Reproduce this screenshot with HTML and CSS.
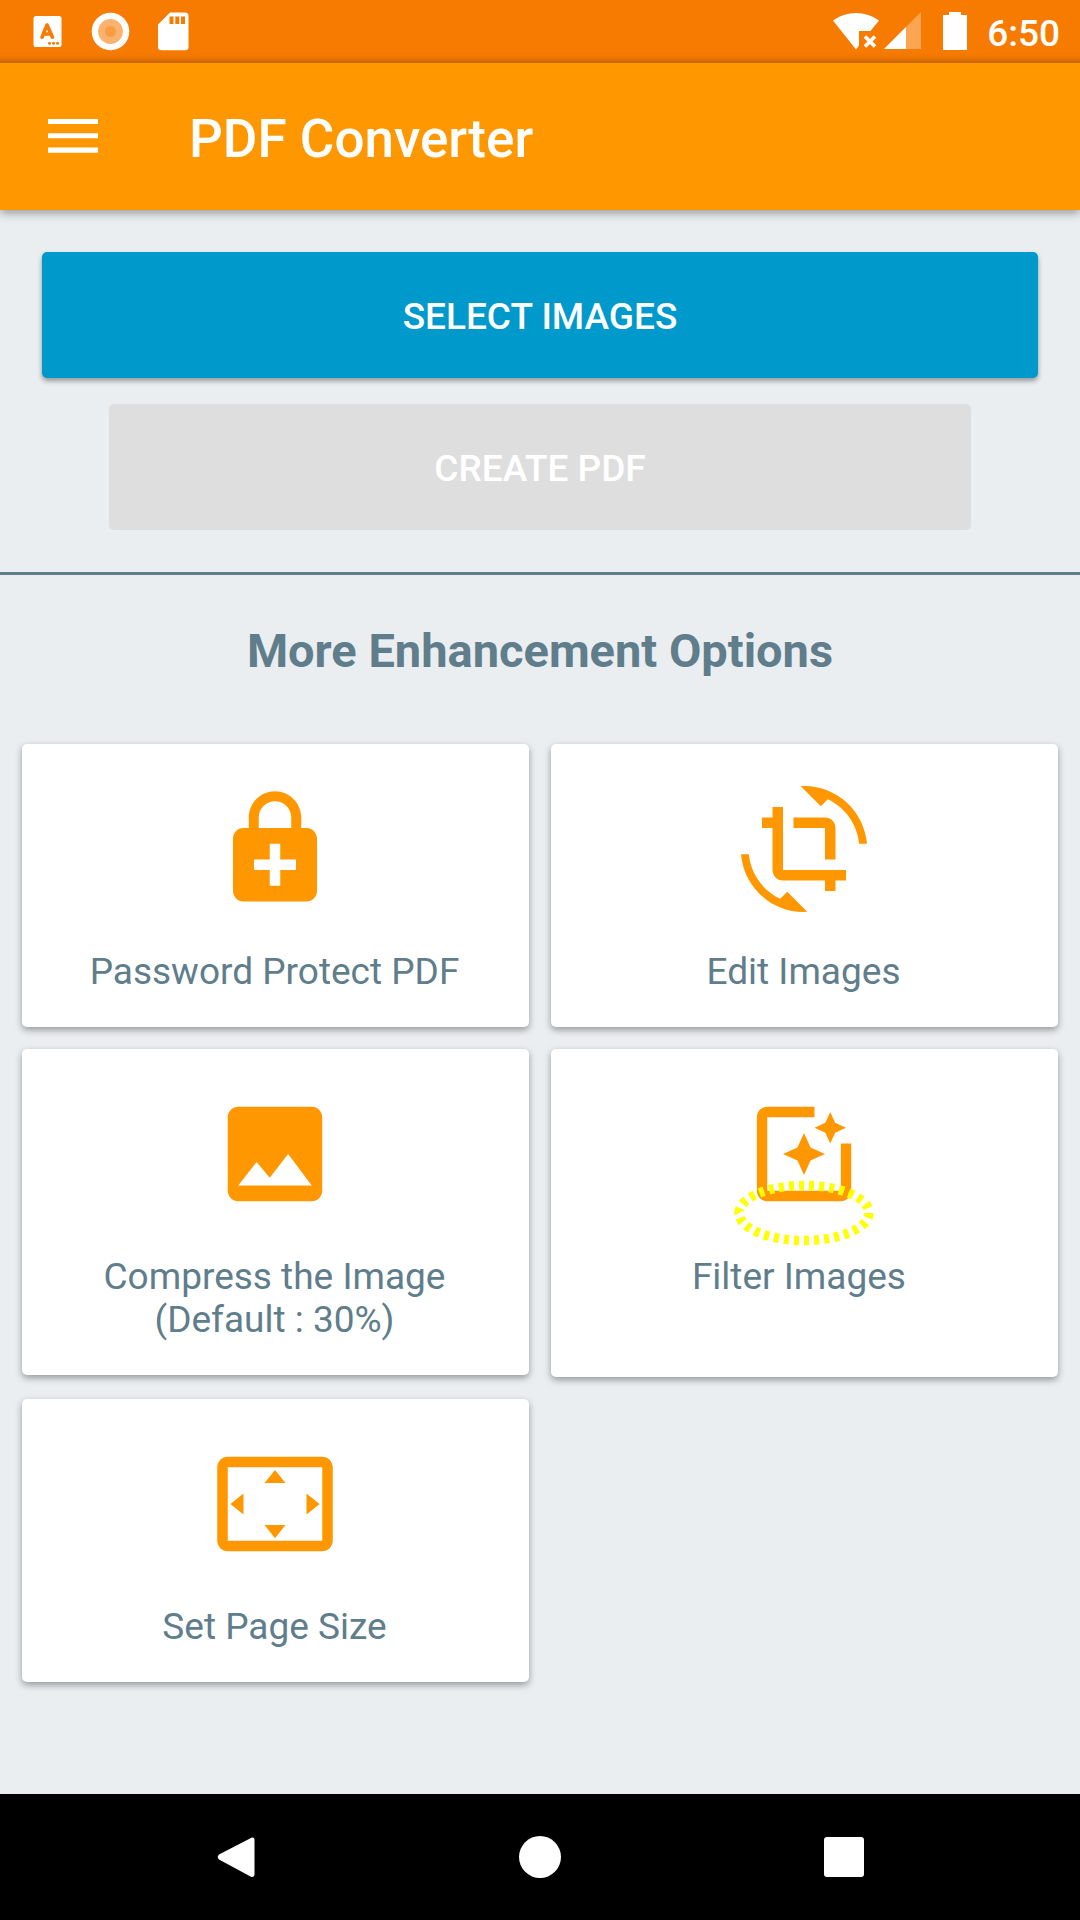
FILE: index.html
```html
<!DOCTYPE html>
<html lang="en">
<head>
<meta charset="utf-8">
<meta name="viewport" content="width=device-width, initial-scale=1">
<title>PDF Converter</title>
<link rel="stylesheet" href="styles.css">
</head>
<body>
<div class="status-bar">
  <div class="status-notifications">
    <svg width="63" height="63" viewBox="0 0 63 63" aria-hidden="true">
      <rect x="17.5" y="16" width="28" height="31" rx="2.5" fill="#fff"/>
      <path d="M26 37.200L31 25L36.500 37.200M28 34H34.500" fill="none" stroke="#f77b00" stroke-width="3.600" stroke-linecap="round" stroke-linejoin="round"/>
      <g fill="#f77b00"><circle cx="33.500" cy="43.200" r="1.500"/><circle cx="37.500" cy="43.200" r="1.500"/><circle cx="41.500" cy="43.200" r="1.500"/></g>
    </svg>
    <svg width="63" height="63" viewBox="0 0 63 63" aria-hidden="true">
      <circle cx="31.500" cy="31.500" r="18.800" fill="#fff"/>
      <circle cx="31.500" cy="31.500" r="12.400" fill="#fab26e"/>
      <circle cx="31.500" cy="31.500" r="5.600" fill="#f99d44"/>
    </svg>
    <svg width="63" height="63" viewBox="0 0 63 63" aria-hidden="true">
      <path d="M28 12.500H43Q46.500 12.500 46.500 16V47Q46.500 50.300 43 50.300H19.500Q16 50.300 16 47V24.500Z" fill="#fff"/>
      <path d="M27.500 16.500h4v7.500h-4zM33.300 16.500h4v7.500h-4zM39 16.500h4v7.500h-4z" fill="#f77b00"/>
    </svg>
  </div>
  <div class="status-system">
    <svg width="46" height="63" viewBox="0 0 46 63" aria-hidden="true">
      <path d="M0 20.500Q10 13 23 13T46 20.500L37.500 31H26V45.500L23 49.500Z" fill="#fff"/>
      <path d="M32 36.500L42 46.500M42 36.500L32 46.500" stroke="#fff" stroke-width="3.600"/>
    </svg>
    <svg class="signal" width="37" height="63" viewBox="0 0 37 63" aria-hidden="true">
      <path d="M37 12V49H0Z" fill="#fba552"/>
      <path d="M22 27V49H0Z" fill="#fff"/>
    </svg>
    <svg class="battery" width="24" height="63" viewBox="0 0 24 63" aria-hidden="true">
      <path d="M6 12H18V15H24V50H0V15H6Z" fill="#fff"/>
    </svg>
    <span class="clock">6:50</span>
  </div>
</div>

<header class="app-bar">
  <button class="menu-button" type="button" aria-label="Open menu">
    <svg width="50" height="36" viewBox="0 0 50 36" aria-hidden="true"><path d="M0 0h50v5H0zM0 14.300h50v5H0zM0 28.600h50v5.200H0z" fill="#fff"/></svg>
  </button>
  <h1 class="app-title">PDF Converter</h1>
</header>

<main class="content">
  <section class="actions">
    <button class="action action-select" type="button">SELECT IMAGES</button>
    <button class="action action-create" type="button" disabled>CREATE PDF</button>
  </section>
  <section class="options">
    <h2 class="options-title">More Enhancement Options</h2>
    <div class="option-grid">
      <button class="option" type="button">
        <svg class="option-icon" viewBox="0 0 24 24" aria-hidden="true"><path fill-rule="evenodd" d="M18 8h-1V6c0-2.760-2.240-5-5-5S7 3.240 7 6v2H6c-1.100 0-2 .9-2 2v10c0 1.100.9 2 2 2h12c1.100 0 2-.9 2-2V10c0-1.100-.9-2-2-2zM8.900 6c0-1.710 1.390-3.100 3.100-3.100s3.100 1.390 3.100 3.100v2H8.900V6zM16 16h-3v3h-2v-3H8v-2h3v-3h2v3h3v2z"/></svg>
        <span>Password Protect PDF</span>
      </button>
      <button class="option" type="button">
        <svg class="option-icon" viewBox="0 0 24 24" aria-hidden="true"><path d="M7.470 21.490C4.200 19.930 1.860 16.760 1.500 13H0c.51 6.160 5.660 11 11.950 11 .23 0 .44-.02.66-.03L8.800 20.150 7.470 21.490zM12.050 0c-.23 0-.44.02-.66.04l3.810 3.810 1.330-1.330C19.800 4.070 22.140 7.240 22.500 11H24C23.490 4.840 18.340 0 12.050 0zM16 14h2V8c0-1.110-.9-2-2-2h-6v2h6v6zM8 16V4H6v2H4v2h2v8c0 1.100.89 2 2 2h8v2h2v-2h2v-2H8z"/></svg>
        <span>Edit Images</span>
      </button>
      <button class="option" type="button">
        <svg class="option-icon" viewBox="0 0 24 24" aria-hidden="true"><path fill-rule="evenodd" d="M21 19V5c0-1.100-.9-2-2-2H5c-1.100 0-2 .9-2 2v14c0 1.100.9 2 2 2h14c1.100 0 2-.9 2-2zM8.500 13.500l2.500 3.010L14.500 12l4.500 6H5l3.500-4.500z"/></svg>
        <span>Compress the Image<br>(Default : 30%)</span>
      </button>
      <button class="option option-tall" type="button">
        <span class="icon-wrap">
          <svg class="option-icon" viewBox="0 0 24 24" aria-hidden="true"><path d="M19.020 10v9H5V5h9V3H5.020c-1.100 0-2 .9-2 2v14c0 1.100.9 2 2 2H19c1.100 0 2-.9 2-2v-9h-1.980zM17 10l.94-2.060L20 7l-2.060-.94L17 4l-.94 2.060L14 7l2.060.94zM13.250 10.750L12 8l-1.250 2.750L8 12l2.750 1.250L12 16l1.250-2.750L16 12z"/></svg>
          <svg class="marker" width="140" height="66" viewBox="0 0 140 66" aria-hidden="true"><ellipse cx="70" cy="33" rx="65" ry="27.500" pathLength="300" fill="none" stroke="#ff0" stroke-width="9.500" stroke-dasharray="5 5"/></svg>
        </span>
        <span>Filter Images&nbsp;</span>
      </button>
      <button class="option" type="button">
        <svg class="option-icon" viewBox="0 0 24 24" aria-hidden="true"><path fill-rule="evenodd" d="M12.010 5.500L10 8h4l-1.990-2.500zM18 10v4l2.500-1.990L18 10zM6 10l-2.500 2.010L6 14v-4zM14 16h-4l2.010 2.500L14 16zM21 3H3c-1.100 0-2 .9-2 2v14c0 1.100.9 2 2 2h18c1.100 0 2-.9 2-2V5c0-1.100-.9-2-2-2zM21 19H3V5h18v14z"/></svg>
        <span>Set Page Size</span>
      </button>
    </div>
  </section>
</main>

<nav class="nav-bar" aria-label="System">
  <button class="nav-button" type="button" aria-label="Back">
    <svg width="42" height="42" viewBox="0 0 42 42" aria-hidden="true"><path d="M34 2.500Q37 .5 38.500 3V39Q37.500 42 34.500 40.500L3 23.500Q.5 21 3 18.500Z" fill="#fff"/></svg>
  </button>
  <button class="nav-button" type="button" aria-label="Home">
    <svg width="42" height="42" viewBox="0 0 42 42" aria-hidden="true"><circle cx="21" cy="21" r="21" fill="#fff"/></svg>
  </button>
  <button class="nav-button" type="button" aria-label="Recent apps">
    <svg width="42" height="42" viewBox="0 0 42 42" aria-hidden="true"><rect x="2" y="1" width="40" height="40" rx="3" fill="#fff"/></svg>
  </button>
</nav>
</body>
</html>
```
FILE: styles.css
```css
* {
  box-sizing: border-box;
}

body {
  margin: 0;
  min-height: 100vh;
  display: flex;
  flex-direction: column;
  background: #eaeef1;
  color: #607d8b;
  font-family: Roboto, "Liberation Sans", sans-serif;
  font-size: 37px;
  line-height: 43px;
}

button {
  margin: 0;
  padding: 0;
  border: 0;
  background: none;
  color: inherit;
  font: inherit;
}

svg {
  display: block;
}

.status-bar {
  display: flex;
  justify-content: space-between;
  padding: 0 20px 0 16px;
  background: linear-gradient(#f77b00 52px, #f07700 57px, #c86400 63px);
}

.status-notifications,
.status-system {
  display: flex;
  align-items: center;
}

.signal {
  margin-left: 5px;
}

.battery {
  margin: 0 20px 0 22px;
}

.clock {
  color: #fff;
  font-weight: 500;
  padding-top: 4px;
}

.app-bar {
  position: relative;
  display: flex;
  align-items: center;
  height: 147px;
  padding: 0 48px;
  gap: 91px;
  background: #ff9800;
  color: #fff;
  box-shadow: 0 3px 9px rgba(0, 0, 0, 0.36);
  clip-path: inset(0 0 -20px 0);
}

.app-title {
  margin: 0;
  padding-top: 4px;
  font-size: 53px;
  line-height: 62px;
  font-weight: 500;
}

.content {
  flex: 1;
}

.actions {
  display: flex;
  flex-direction: column;
  align-items: center;
  gap: 26px;
  padding: 42px;
  border-bottom: 3px solid #607d8b;
}

.action {
  height: 126px;
  padding-top: 2px;
  border-radius: 5px;
  color: #fff;
  font-weight: 500;
}

.action-select {
  width: 100%;
  background: #0099cc;
  box-shadow: 0 3px 5px rgba(0, 0, 0, 0.36);
}

.action-create {
  width: calc(100% - 134px);
  background: #dedede;
}

.options {
  padding: 48px 22px 22px;
}

.options-title {
  margin: 0 0 65px;
  font-size: 47px;
  line-height: 56px;
  font-weight: 700;
  text-align: center;
}

.option-grid {
  display: grid;
  grid-template-columns: 1fr 1fr;
  align-items: start;
  gap: 22px;
}

.option {
  display: flex;
  flex-direction: column;
  align-items: center;
  gap: 38px;
  padding: 42px 22px 34px 20px;
  border-radius: 5px;
  background: #fff;
  box-shadow: 0 3px 7px rgba(0, 0, 0, 0.36);
}

.option-tall {
  min-height: 328px;
}

.option-icon {
  width: 126px;
  height: 126px;
  fill: #ff9800;
}

.icon-wrap {
  position: relative;
}

.marker {
  position: absolute;
  left: -7px;
  top: 89px;
}

.nav-bar {
  display: flex;
  justify-content: space-between;
  height: 126px;
  padding: 0 20%;
  background: #000;
}

.nav-button {
  display: flex;
  align-items: center;
}
```
